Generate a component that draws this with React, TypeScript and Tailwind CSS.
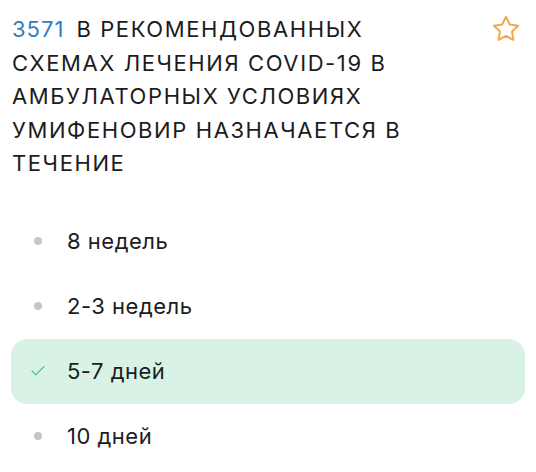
import { Check } from "lucide-react";

const options = [
  { text: "8 недель", correct: false },
  { text: "2-3 недель", correct: false },
  { text: "5-7 дней", correct: true },
  { text: "10 дней", correct: false },
];

export default function App() {
  return (
    <div className="w-[536px] h-[472px] bg-white font-['Inter',sans-serif] text-[#1c1c1e] overflow-hidden">
      <div className="flex items-start justify-between pl-3 pr-[14px] pt-[13px]">
        <h1 className="w-[440px] text-[22px] leading-[33.5px] tracking-[1.6px] uppercase">
          <span className="text-[#2f80c3] tracking-[1px] mr-[12px]">3571</span>
          В рекомендованных схемах лечения COVID-19 в амбулаторных условиях умифеновир назначается в течение
        </h1>
        <svg width="32" height="32" viewBox="0 0 24 24" fill="none" stroke="#f4a950" strokeWidth="1.5" strokeLinejoin="round">
          <path d="M12 2.8l2.8 5.8 6.3.9-4.6 4.4 1.1 6.3L12 17.2l-5.6 3 1.1-6.3-4.6-4.4 6.3-.9z" />
        </svg>
      </div>
      <div className="flex flex-col px-[11px] mt-[28px]">
        {options.map((o) => (
          <div
            key={o.text}
            className={`flex items-center h-[65px] rounded-2xl ${o.correct ? "bg-[#d8f3e5]" : ""}`}
          >
            <div className="w-[52px] flex justify-center pl-[2px]">
              {o.correct ? (
                <Check size={18} strokeWidth={1.6} className="text-[#4fc98f]" />
              ) : (
                <div className="w-[8px] h-[8px] rounded-full bg-[#c6c6c8]" />
              )}
            </div>
            <span className="text-[22px] tracking-[0.5px] pl-[4px]">{o.text}</span>
          </div>
        ))}
      </div>
    </div>
  );
}
